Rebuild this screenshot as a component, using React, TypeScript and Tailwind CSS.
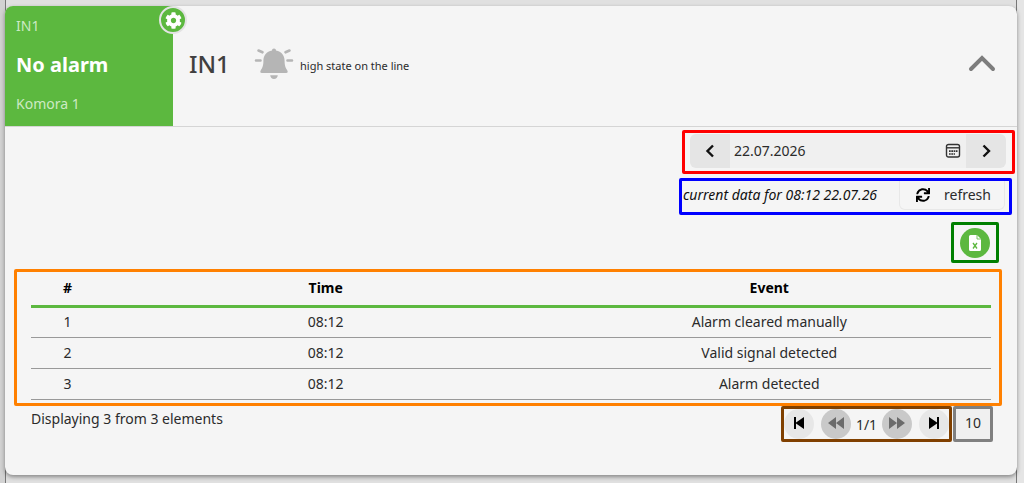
import { useState } from "react";
import { FaCog, FaSync } from "react-icons/fa";

const GREEN_BUTTON = "bg-[#5cb83f] text-white";

const EVENTS = [
  { id: 1, time: "08:12", event: "Alarm cleared manually" },
  { id: 2, time: "08:12", event: "Valid signal detected" },
  { id: 3, time: "08:12", event: "Alarm detected" },
];

function BellIcon() {
  return (
    <svg width="40" height="32" viewBox="0 0 40 32" fill="#b5b5b5" aria-hidden>
      <path d="M20 .5c1.200 0 2 .8 2 2 5.500 1 8.600 5 8.600 10.300 0 5 1 7.300 2.600 9.400.9 1.300.6 2.800-1 2.800H7.800c-1.600 0-1.900-1.500-1-2.800 1.600-2.100 2.600-4.400 2.600-9.400C9.400 7.500 12.500 3.500 18 2.500c0-1.200.8-2 2-2z" />
      <path d="M16.200 27.200h7.600c-.2 2.400-1.700 3.800-3.800 3.800s-3.600-1.400-3.800-3.800z" />
      <path
        d="M4.500 2.500l4 1.800M35.500 2.500l-4 1.800M2 12.500h4.500M33.500 12.500H38"
        stroke="#b5b5b5"
        strokeWidth="2.6"
        strokeLinecap="round"
      />
    </svg>
  );
}

function Chevron({ d }: { d: string }) {
  return (
    <svg width="16" height="16" viewBox="0 0 16 16" fill="none" stroke="#111" strokeWidth="2.4" aria-hidden>
      <path d={d} />
    </svg>
  );
}

function CalendarIcon() {
  return (
    <svg width="16" height="16" viewBox="0 0 16 16" fill="none" stroke="#333" aria-hidden>
      <rect x="1.500" y="1.500" width="13" height="12.500" rx="2" strokeWidth="1.4" />
      <path d="M1.500 4.800h13" strokeWidth="1.4" />
      <path d="M4 8.200h8.500M4 11h6" strokeWidth="1.7" strokeDasharray="1.700 .6" />
    </svg>
  );
}

function FileExcelIcon() {
  return (
    <svg width="12" height="16" viewBox="0 0 12 16" aria-hidden>
      <path
        fill="#fff"
        d="M1.500 0H8L12 4V14.500a1.500 1.500 0 0 1-1.500 1.500h-9A1.500 1.500 0 0 1 0 14.500v-13A1.500 1.500 0 0 1 1.500 0z"
      />
      <path d="M8 0v4h4" fill="none" stroke="#5cb83f" strokeWidth=".8" />
      <path d="M4 8l4 5.500M8 8l-4 5.500" stroke="#5cb83f" strokeWidth="1.3" />
    </svg>
  );
}

interface PagerButtonProps {
  label: string;
  d: string;
  disabled?: boolean;
}

function PagerButton({ label, d, disabled }: PagerButtonProps) {
  return (
    <button
      type="button"
      aria-label={label}
      disabled={disabled}
      className={`flex size-[30px] items-center justify-center rounded-full pb-[2px] ${
        disabled ? "bg-[#c9c9c9] text-[#6b6b6b]" : "bg-[#e7e7e7] text-black"
      }`}
    >
      <svg width="18" height="14" viewBox="0 0 18 14" fill="currentColor" aria-hidden>
        <path d={d} />
      </svg>
    </button>
  );
}

export default function App() {
  const [open, setOpen] = useState(true);
  const [date, setDate] = useState("22.07.2026");
  const [pageSize, setPageSize] = useState("10");

  return (
    <div className="flex min-h-screen bg-[#e5e5e5] font-['Noto_Sans','Open_Sans',sans-serif] text-sm text-[#2b2b2b]">
      <div className="w-[5px] shrink-0 bg-[#d2d2d2]" />
      <div className="min-w-0 flex-1 border-x border-[#777] bg-[#e0e0e0] pt-[6px] pb-2">
        <main className="-mx-px rounded-lg bg-[#f5f5f5] shadow-[0_2px_4px_#00000066]">
          <header className="flex h-[121px] border-b border-[#d5d5d5]">
            <div className="relative flex w-[168px] shrink-0 flex-col justify-between rounded-tl-lg bg-[#5cb83f] px-[11px] pt-[10px] pb-3 text-[#cdeac4]">
              <span>IN1</span>
              <strong className="text-xl text-white">No alarm</strong>
              <span>Komora 1</span>
              <button
                type="button"
                aria-label="Settings"
                className={`absolute top-0 -right-[14px] flex size-7 items-center justify-center rounded-full border-2 border-[#e3e3e3] ${GREEN_BUTTON}`}
              >
                <FaCog size={17} />
              </button>
            </div>
            <div className="flex flex-1 items-center pr-5 pb-1 pl-4">
              <h1 className="w-[65px] text-2xl font-medium text-[#404040]">IN1</h1>
              <BellIcon />
              <p className="ml-[6px] flex-1 pt-1 text-[11px]">high state on the line</p>
              <button type="button" aria-label="Toggle details" aria-expanded={open} onClick={() => setOpen(!open)}>
                <svg
                  width="30"
                  height="20"
                  viewBox="0 0 30 20"
                  fill="none"
                  stroke="#7d7d7d"
                  strokeWidth="4"
                  strokeLinecap="round"
                  aria-hidden
                >
                  <path d="M4 15L15 4l11 11" />
                </svg>
              </button>
            </div>
          </header>

          {open && (
            <div className="flex flex-col pt-[3px] pb-[33px]">
              <div className="mr-[2px] flex h-11 w-[333px] items-start self-end rounded-[2px] border-3 border-[#ff0000] pt-px pr-[6px] pl-[5px]">
                <button
                  type="button"
                  aria-label="Previous day"
                  className="flex h-[34px] w-10 items-center justify-center rounded-l-md bg-[#e5e5e5]"
                >
                  <Chevron d="M11 2.500L5.500 8l5.500 5.500" />
                </button>
                <div className="flex h-[34px] min-w-0 flex-1 items-center bg-[#f0f0f0] pr-[5px] pl-1">
                  <input
                    aria-label="Date"
                    className="min-w-0 flex-1 outline-none"
                    value={date}
                    onChange={(e) => setDate(e.target.value)}
                  />
                  <CalendarIcon />
                </div>
                <button
                  type="button"
                  aria-label="Next day"
                  className="flex h-[34px] w-10 items-center justify-center rounded-r-md bg-[#e5e5e5]"
                >
                  <Chevron d="M5.500 2.500L11 8l-5.500 5.500" />
                </button>
              </div>

              <div className="mt-1 mr-[5px] flex h-[37px] w-[333px] items-start justify-between self-end rounded-[2px] border-3 border-[#0000ff] pr-1 pl-px">
                <em className="leading-7 whitespace-nowrap text-[#111]">current data for 08:12 22.07.26</em>
                <button
                  type="button"
                  className="flex h-[29px] w-[106px] items-center gap-[14px] rounded-b-md border border-t-0 border-[#e8e8e8] pl-4"
                >
                  <FaSync size={14} color="#000" />
                  refresh
                </button>
              </div>

              <div className="mt-[7px] mr-[18px] flex h-[41px] w-12 items-center justify-center self-end rounded-[2px] border-3 border-[#008000]">
                <button
                  type="button"
                  aria-label="Export to Excel"
                  className={`flex size-[30px] items-center justify-center rounded-full ${GREEN_BUTTON}`}
                >
                  <FileExcelIcon />
                </button>
              </div>

              <div className="mt-[6px] mr-[15px] ml-[9px] rounded-[2px] border-3 border-[#ff8000] pr-2 pb-[3px] pl-[14px]">
                <table className="w-full table-fixed border-collapse text-center">
                  <thead>
                    <tr className="h-[34px] border-b-3 border-[#5cb83f] text-black">
                      <th className="w-[73px]">#</th>
                      <th>Time</th>
                      <th>Event</th>
                    </tr>
                  </thead>
                  <tbody>
                    {EVENTS.map((row) => (
                      <tr key={row.id} className="h-[31px] border-b border-[#999]">
                        <td>{row.id}</td>
                        <td>{row.time}</td>
                        <td>{row.event}</td>
                      </tr>
                    ))}
                  </tbody>
                </table>
              </div>

              <footer className="mr-6 ml-[26px] flex">
                <p className="flex-1 pt-[3px]">Displaying 3 from 3 elements</p>
                <nav
                  aria-label="Pagination"
                  className="flex h-9 w-[171px] items-start rounded-[2px] border-3 border-[#804000]"
                >
                  <PagerButton label="First page" d="M4 1h2v5.500L14 1v12L6 7.500V13H4z" />
                  <div className="flex flex-1 justify-between px-[7px]">
                    <PagerButton label="Previous page" disabled d="M9 1v12L1 7zM17 1v12L9 7z" />
                    <span className="leading-8">1/1</span>
                    <PagerButton label="Next page" disabled d="M1 1l8 6-8 6zM9 1l8 6-8 6z" />
                  </div>
                  <PagerButton label="Last page" d="M14 1h-2v5.500L4 1v12l8-5.500V13h2z" />
                </nav>
                <select
                  aria-label="Elements per page"
                  className="ml-px h-9 w-10 appearance-none rounded-[2px] border-3 border-[#808080] bg-[#f0f0f0] pb-px text-center"
                  value={pageSize}
                  onChange={(e) => setPageSize(e.target.value)}
                >
                  <option>10</option>
                  <option>25</option>
                  <option>50</option>
                </select>
              </footer>
            </div>
          )}
        </main>
      </div>
      <div className="w-[7px] shrink-0" />
    </div>
  );
}
